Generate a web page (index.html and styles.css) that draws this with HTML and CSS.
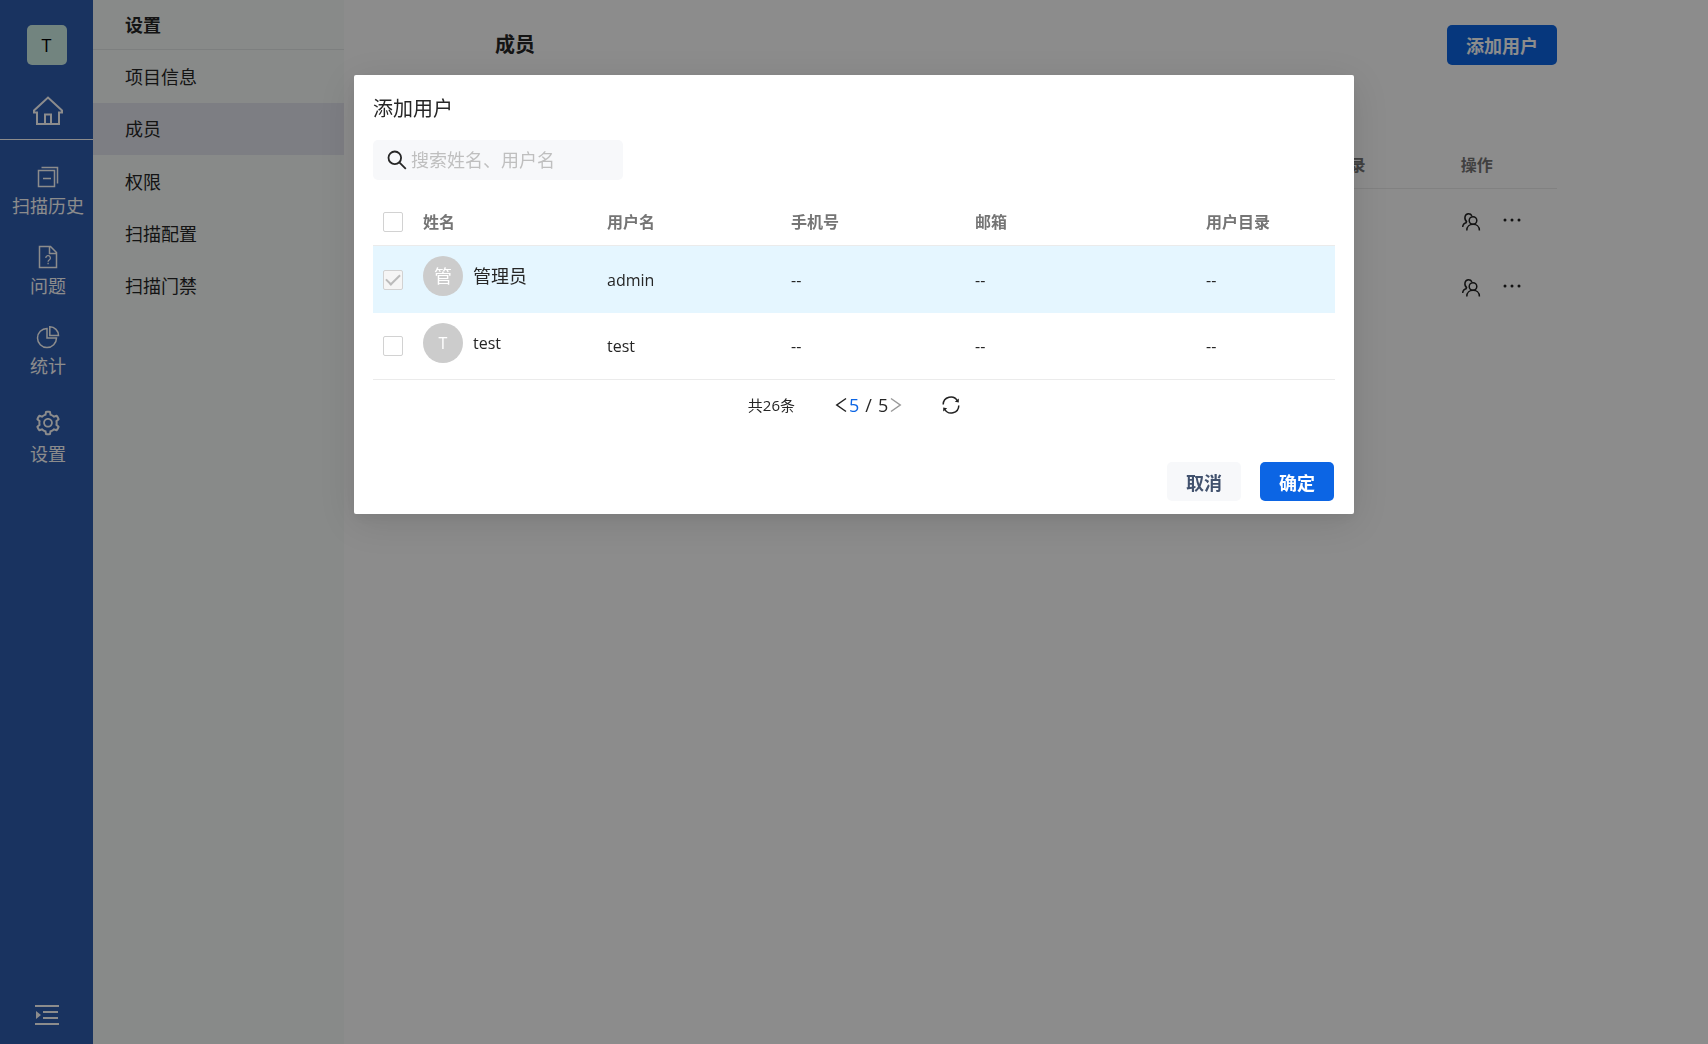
FILE: index.html
```html
<!DOCTYPE html>
<html lang="zh-CN">
<head>
    <meta charset="UTF-8">
    <meta name="viewport" content="width=device-width, initial-scale=1.0">
    <title>成员</title>
    <link rel="stylesheet" href="styles.css">
</head>
<body>
    <div class="app">
        <nav class="sidebar">
            <a href="#" class="project">T</a>
            <a href="#" class="home" aria-label="首页">
                <svg width="30" height="30" viewBox="0 0 30 30" fill="none" stroke="currentColor" stroke-width="2">
                    <path d="M1 16.5v-2L15 1.5l14 13v2h-3V28H4V16.5z"/>
                    <path d="M12 28V18.500h6V28"/>
                </svg>
            </a>
            <a href="#" class="nav-item">
                <svg width="24" height="24" viewBox="0 0 24 24" fill="none" stroke="currentColor" stroke-width="1.500">
                    <path d="M2.500 5.500h16v16h-16zM5.500 2.500h16v16M7 13.500h8"/>
                </svg>
                <span>扫描历史</span>
            </a>
            <a href="#" class="nav-item">
                <svg width="24" height="24" viewBox="0 0 24 24" fill="none" stroke="currentColor" stroke-width="1.500">
                    <path d="M3.500 1.500h11l6 6v15h-17zM13.500 1.500v7h7"/>
                    <path d="M9.800 13a2.300 2.300 0 1 1 3.400 2c-.8.5-1.100.8-1.100 1.700M12.100 17.700v1.500" stroke-width="1.300"/>
                </svg>
                <span>问题</span>
            </a>
            <a href="#" class="nav-item nav-stats">
                <svg width="24" height="24" viewBox="0 0 24 24" fill="none" stroke="currentColor" stroke-width="1.500">
                    <path d="M11 3.500A9.500 9.500 0 1 0 20.500 13H11z"/>
                    <path d="M13.800 1.800v8.700h8.700a8.700 8.700 0 0 0-8.700-8.700z"/>
                </svg>
                <span>统计</span>
            </a>
            <a href="#" class="nav-item">
                <svg width="28" height="28" viewBox="0 0 1024 1024" fill="currentColor">
                    <path d="M924.8 625.7l-65.5-56c3.1-19 4.7-38.4 4.7-57.8s-1.6-38.8-4.7-57.8l65.5-56a32.03 32.03 0 009.3-35.2l-.9-2.6a443.74 443.74 0 00-79.7-137.9l-1.8-2.1a32.12 32.12 0 00-35.1-9.5l-81.3 28.9c-30-24.6-63.5-44-99.7-57.6l-15.7-85a32.05 32.05 0 00-25.8-25.7l-2.7-.5c-52.1-9.4-106.9-9.4-159 0l-2.7.5a32.05 32.05 0 00-25.8 25.7l-15.8 85.4a351.86 351.86 0 00-99 57.4l-81.9-29.1a32 32 0 00-35.1 9.5l-1.8 2.1a446.02 446.02 0 00-79.7 137.9l-.9 2.6c-4.5 12.5-.8 26.5 9.3 35.2l66.3 56.6c-3.1 18.8-4.6 38-4.6 57.1 0 19.2 1.5 38.4 4.6 57.1L99 625.5a32.03 32.03 0 00-9.3 35.2l.9 2.6c18.1 50.4 44.9 96.9 79.7 137.9l1.8 2.1a32.12 32.12 0 0035.1 9.5l81.9-29.1c29.8 24.5 63.1 43.9 99 57.4l15.8 85.4a32.05 32.05 0 0025.8 25.7l2.7.5a449.4 449.4 0 00159 0l2.7-.5a32.05 32.05 0 0025.8-25.7l15.7-85a350 350 0 0099.7-57.6l81.3 28.9a32 32 0 0035.1-9.5l1.8-2.1c34.8-41.1 61.6-87.5 79.7-137.9l.9-2.6c4.5-12.3.8-26.3-9.3-35zM788.3 465.9c2.5 15.1 3.8 30.6 3.8 46.1s-1.3 31-3.8 46.1l-6.6 40.1 74.7 63.9a370.03 370.03 0 01-42.6 73.6L721 702.8l-31.4 25.8c-23.9 19.6-50.5 35-79.3 45.8l-38.1 14.3-17.9 97a377.5 377.5 0 01-85 0l-17.9-97.2-37.8-14.5c-28.5-10.8-55-26.2-78.7-45.7l-31.4-25.9-93.4 33.2c-17-22.9-31.2-47.6-42.6-73.6l75.5-64.5-6.5-40c-2.4-14.9-3.7-30.3-3.7-45.5 0-15.3 1.2-30.6 3.7-45.5l6.5-40-75.5-64.5c11.3-26.1 25.6-50.7 42.6-73.6l93.4 33.2 31.4-25.9c23.7-19.5 50.2-34.9 78.7-45.7l37.9-14.3 17.9-97.2c28.1-3.2 56.8-3.2 85 0l17.9 97 38.1 14.3c28.7 10.8 55.4 26.2 79.3 45.8l31.4 25.8 92.8-32.9c17 22.9 31.2 47.6 42.6 73.6L781.8 426l6.5 39.9zM512 326c-97.2 0-176 78.8-176 176s78.8 176 176 176 176-78.8 176-176-78.8-176-176-176zm79.2 255.2A111.6 111.6 0 01512 614c-29.900 0-58-11.700-79.200-32.800A111.600 111.600 0 01400 502c0-29.900 11.700-58 32.800-79.200C454 401.600 482.100 390 512 390c29.900 0 58 11.600 79.200 32.800A111.600 111.600 0 01624 502c0 29.900-11.700 58-32.800 79.200z"/>
                </svg>
                <span>设置</span>
            </a>
            <button type="button" class="expand" aria-label="展开">
                <svg width="24" height="22" viewBox="0 0 24 22" fill="currentColor">
                    <path d="M0 1h24v2H0zM8 7h15v2H8zM8 13h15v2H8zM0 19h24v2H0zM1 7l5 4-5 4z"/>
                </svg>
            </button>
        </nav>

        <aside class="submenu">
            <h2>设置</h2>
            <a href="#">项目信息</a>
            <a href="#" class="active">成员</a>
            <a href="#">权限</a>
            <a href="#">扫描配置</a>
            <a href="#">扫描门禁</a>
        </aside>

        <main class="page">
            <header class="page-header">
                <h1>成员</h1>
                <button type="button" class="btn btn-primary">添加用户</button>
            </header>
            <table class="members">
                <thead>
                    <tr>
                        <th class="col-info"></th>
                        <th class="col-dir">用户目录</th>
                        <th class="col-action">操作</th>
                    </tr>
                </thead>
                <tbody>
                    <tr>
                        <td></td>
                        <td></td>
                        <td>
                            <div class="actions">
                                <button type="button" class="icon-btn" aria-label="角色">
                                    <svg width="20" height="20" viewBox="0 0 20 20" fill="none" stroke="currentColor" stroke-width="1.500">
                                        <circle cx="12" cy="8.500" r="3.800"/>
                                        <path d="M5.800 18.500c0-8.200 12.600-8.200 12.600 0M6 10.200C2.600 7.500 3.500 1.800 7.500 1.800c1.600 0 2.800.8 3.400 2M6 10.200c-2.600.8-4.300 2.300-4.300 4.800"/>
                                    </svg>
                                </button>
                                <button type="button" class="icon-btn" aria-label="更多">
                                    <svg width="18" height="18" viewBox="0 0 18 18" fill="currentColor">
                                        <circle cx="2" cy="7" r="1.500"/><circle cx="9" cy="7" r="1.500"/><circle cx="16" cy="7" r="1.500"/>
                                    </svg>
                                </button>
                            </div>
                        </td>
                    </tr>
                    <tr>
                        <td></td>
                        <td></td>
                        <td>
                            <div class="actions">
                                <button type="button" class="icon-btn" aria-label="角色">
                                    <svg width="20" height="20" viewBox="0 0 20 20" fill="none" stroke="currentColor" stroke-width="1.500">
                                        <circle cx="12" cy="8.500" r="3.800"/>
                                        <path d="M5.800 18.500c0-8.200 12.600-8.200 12.600 0M6 10.200C2.600 7.500 3.500 1.800 7.500 1.800c1.600 0 2.800.8 3.400 2M6 10.200c-2.600.8-4.300 2.300-4.300 4.800"/>
                                    </svg>
                                </button>
                                <button type="button" class="icon-btn" aria-label="更多">
                                    <svg width="18" height="18" viewBox="0 0 18 18" fill="currentColor">
                                        <circle cx="2" cy="7" r="1.500"/><circle cx="9" cy="7" r="1.500"/><circle cx="16" cy="7" r="1.500"/>
                                    </svg>
                                </button>
                            </div>
                        </td>
                    </tr>
                </tbody>
            </table>
        </main>
    </div>

    <div class="mask">
        <div class="modal" role="dialog" aria-labelledby="modalTitle">
            <h3 id="modalTitle">添加用户</h3>
            <div class="search">
                <label for="keyword" aria-label="搜索">
                    <svg width="20" height="20" viewBox="0 0 20 20" fill="none" stroke="currentColor" stroke-width="1.800">
                        <circle cx="7.800" cy="7.800" r="6.300"/>
                        <path d="M12.300 12.300l6.500 6.500"/>
                    </svg>
                </label>
                <input type="text" id="keyword" placeholder="搜索姓名、用户名">
            </div>

            <table class="users">
                <thead>
                    <tr>
                        <th class="col-check"><input type="checkbox" aria-label="全选"></th>
                        <th class="col-user">姓名</th>
                        <th class="col-user">用户名</th>
                        <th class="col-user">手机号</th>
                        <th class="col-mail">邮箱</th>
                        <th>用户目录</th>
                    </tr>
                </thead>
                <tbody>
                    <tr class="selected">
                        <td><input type="checkbox" aria-label="管理员" checked disabled></td>
                        <td class="name"><div class="user"><span class="avatar">管</span><span>管理员</span></div></td>
                        <td>admin</td>
                        <td>--</td>
                        <td>--</td>
                        <td>--</td>
                    </tr>
                    <tr>
                        <td><input type="checkbox" aria-label="test"></td>
                        <td class="name"><div class="user"><span class="avatar latin">T</span><span class="latin">test</span></div></td>
                        <td>test</td>
                        <td>--</td>
                        <td>--</td>
                        <td>--</td>
                    </tr>
                </tbody>
            </table>

            <div class="pagination">
                <span class="total">共26条</span>
                <div class="pager">
                    <button type="button" class="icon-btn" aria-label="上一页">
                        <svg width="12" height="16" viewBox="0 0 12 16" fill="none" stroke="currentColor" stroke-width="1.500"><path d="M11 1.500L1.800 8l9.200 6.500"/></svg>
                    </button>
                    <span class="pages"><span class="current">5</span><span>/</span><span>5</span></span>
                    <button type="button" class="icon-btn" aria-label="下一页" disabled>
                        <svg width="12" height="16" viewBox="0 0 12 16" fill="none" stroke="currentColor" stroke-width="1.500"><path d="M1 1.500L10.200 8 1 14.500"/></svg>
                    </button>
                </div>
                <button type="button" class="icon-btn" aria-label="刷新">
                    <svg width="18" height="18" viewBox="0 0 18 18" fill="none" stroke="currentColor" stroke-width="1.500">
                        <path d="M1.200 8.500A7.600 7.600 0 0 1 15.500 5M16.800 9.500A7.600 7.600 0 0 1 2.500 13"/>
                        <path d="M16.800 2.600v4l-4-.8zM1.200 15.400v-4l4 .8z" fill="currentColor" stroke="none"/>
                    </svg>
                </button>
            </div>

            <div class="modal-footer">
                <button type="button" class="btn">取消</button>
                <button type="button" class="btn btn-primary">确定</button>
            </div>
        </div>
    </div>
</body>
</html>
```

FILE: styles.css
```css
* {
    box-sizing: border-box;
}

body {
    margin: 0;
    font-family: "Open Sans", "Noto Sans CJK SC", sans-serif;
    font-size: 18px;
    line-height: 28px;
    color: #262626;
}

a {
    color: inherit;
    text-decoration: none;
}

h1, h2, h3 {
    margin: 0;
}

svg {
    display: block;
}

button {
    font-family: inherit;
    cursor: pointer;
}

.app {
    display: flex;
    min-height: 100vh;
    background-color: #fff;
}

/* left navigation */
.sidebar {
    display: flex;
    flex-direction: column;
    align-items: center;
    width: 93px;
    padding: 25px 0 18px;
    background-color: #2f5daf;
    color: #fff;
}

.project {
    width: 40px;
    height: 40px;
    border-radius: 5px;
    background-color: #cff0e8;
    color: #000;
    font-size: 18px;
    line-height: 40px;
    text-align: center;
}

.home {
    display: flex;
    justify-content: center;
    width: 100%;
    margin-bottom: 25px;
    padding: 31px 0 13px 3px;
    border-bottom: 1px solid #fff;
}

.nav-item {
    display: flex;
    flex-direction: column;
    align-items: center;
    gap: 3px;
    width: 100%;
    height: 80px;
    padding-left: 3px;
}

.nav-stats {
    height: 84px;
}

.expand {
    margin-top: auto;
    padding: 0;
    border: none;
    background: none;
    color: #fff;
}

/* settings menu */
.submenu {
    width: 251px;
    background-color: #f8fcfa;
}

.submenu h2 {
    height: 50px;
    padding-left: 32px;
    border-bottom: 1px solid #e4e8e8;
    font-size: 18px;
    line-height: 51px;
}

.submenu a {
    display: block;
    padding: 12px 32px;
}

.submenu h2 + a {
    margin-top: 1px;
}

.submenu .active {
    margin-bottom: 1px;
    background-color: #e4e5ef;
}

/* members page */
.page {
    flex: 1;
    padding: 25px 151px;
}

.page-header {
    display: flex;
    justify-content: space-between;
    align-items: center;
    margin-bottom: 76px;
}

.page-header h1 {
    font-size: 20px;
    line-height: 30px;
}

.btn {
    height: 40px;
    padding: 0 19px;
    border: none;
    border-radius: 5px;
    background-color: #f7f8fa;
    color: #42526e;
    font-size: 18px;
    font-weight: bold;
}

.btn-primary {
    background-color: #0c65e4;
    color: #fff;
}

table {
    width: 100%;
    border-collapse: separate;
    border-spacing: 0;
    table-layout: fixed;
}

th {
    height: 48px;
    padding: 0 10px;
    border-bottom: 1px solid #ebebeb;
    color: #757575;
    font-size: 16px;
    text-align: left;
}

td {
    height: 67px;
    padding: 0 10px;
    font-size: 16px;
}

.members td {
    height: 66px;
}

.col-info {
    width: 75%;
}

.col-dir {
    width: 15%;
}

.actions {
    display: flex;
    gap: 22px;
}

.icon-btn {
    padding: 0;
    border: none;
    background: none;
    color: #222;
}

.icon-btn:disabled {
    color: #999;
}

/* add user dialog */
.mask {
    position: fixed;
    inset: 0;
    padding-top: 75px;
    background-color: rgba(0, 0, 0, 0.45);
}

.modal {
    max-width: 1000px;
    margin: 0 auto;
    padding: 20px 19px 13px;
    border-radius: 2px;
    background-color: #fff;
    box-shadow: 0 4px 12px rgba(0, 0, 0, 0.05), 0 8px 40px 4px rgba(0, 0, 0, 0.1);
}

.modal h3 {
    font-size: 20px;
    font-weight: normal;
}

.search {
    display: flex;
    align-items: center;
    gap: 4px;
    width: 250px;
    height: 40px;
    margin: 17px 0 18px;
    padding: 0 14px;
    border-radius: 5px;
    background-color: #f7f8fa;
}

.search input {
    flex: 1;
    min-width: 0;
    padding: 0;
    border: none;
    outline: none;
    background: none;
    font-family: inherit;
    font-size: 18px;
}

.search input::placeholder {
    color: #bfbfbf;
}

.col-check {
    width: 40px;
}

.col-user {
    width: 184px;
}

.col-mail {
    width: 231px;
}

input[type="checkbox"] {
    appearance: none;
    display: grid;
    place-items: center;
    width: 20px;
    height: 20px;
    margin: 0;
    border: 1px solid #d2d2d2;
    border-radius: 2px;
    background-color: #fff;
}

input[type="checkbox"]:disabled {
    background-color: #f5f5f5;
}

input[type="checkbox"]:checked::after {
    content: "";
    width: 12px;
    height: 6px;
    margin-bottom: 4px;
    border-left: 2px solid #bbb;
    border-bottom: 2px solid #bbb;
    transform: rotate(-45deg);
}

.selected td {
    background-color: #e5f6ff;
}

.users tbody tr:last-child td {
    border-bottom: 1px solid #ebebeb;
}

.users .name {
    padding-top: 10px;
    font-size: 18px;
    vertical-align: top;
}

.user {
    display: flex;
    align-items: center;
    gap: 10px;
}

.avatar {
    width: 40px;
    height: 40px;
    border-radius: 50%;
    background-color: #ccc;
    color: #fff;
    line-height: 40px;
    text-align: center;
}

.latin {
    font-size: 16px;
}

.pagination {
    display: flex;
    justify-content: center;
    align-items: center;
    gap: 40px;
    height: 50px;
}

.total {
    font-size: 15px;
}

.pager {
    display: flex;
    align-items: center;
    gap: 2px;
}

.pages {
    display: flex;
    gap: 6px;
}

.current {
    color: #0c65e4;
}

.modal-footer {
    display: flex;
    justify-content: flex-end;
    gap: 19px;
    margin-top: 32px;
    padding-right: 1px;
}

.modal-footer .btn {
    height: 39px;
}
```
